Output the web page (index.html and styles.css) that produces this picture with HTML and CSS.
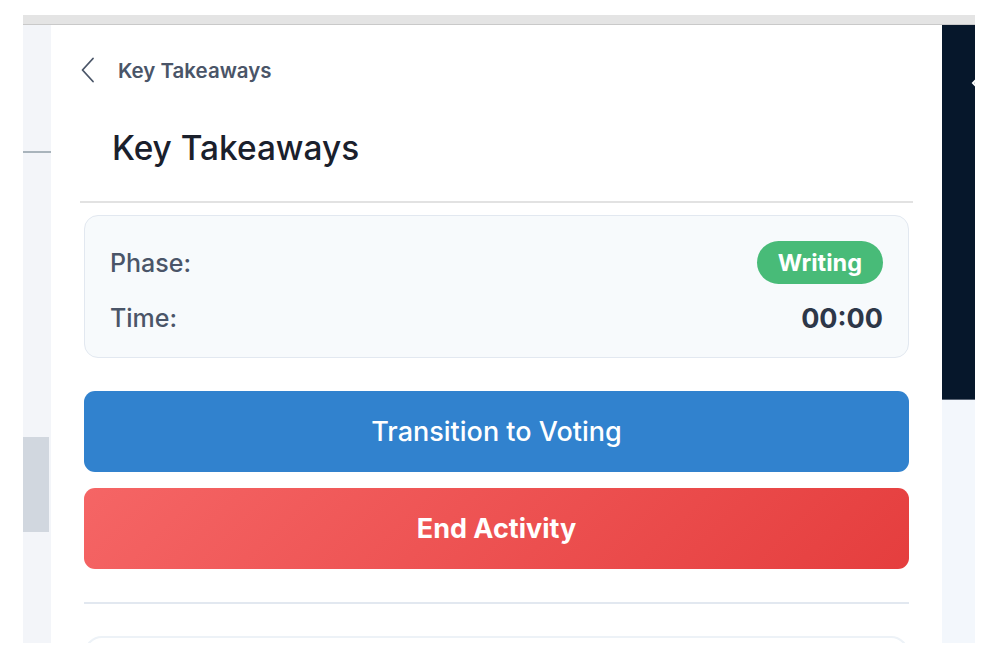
FILE: index.html
```html
<!DOCTYPE html>
<html lang="en">
<head>
    <meta charset="UTF-8">
    <meta name="viewport" content="width=device-width, initial-scale=1.0">
    <title>Key Takeaways</title>
    <link rel="stylesheet" href="styles.css">
</head>
<body>
    <div class="frame">
        <div class="topbar"></div>
        <div class="layout">
            <aside class="side-left">
                <div class="side-line"></div>
                <div class="side-block"></div>
            </aside>

            <main class="panel">
                <div class="crumb">
                    <svg class="crumb-back" width="16" height="26" viewBox="0 0 16 26">
                        <path d="M13 1.5 L2.5 13 L13 24.5" fill="none" stroke="#4a5568" stroke-width="1.8" stroke-linecap="round" stroke-linejoin="round"/>
                    </svg>
                    <span class="crumb-text">Key Takeaways</span>
                </div>

                <h1 class="title">Key Takeaways</h1>
                <div class="divider"></div>

                <div class="controls">
                    <div class="status-card">
                        <div class="status-row">
                            <span class="status-label">Phase:</span>
                            <span class="pill">Writing</span>
                        </div>
                        <div class="status-row status-row-time">
                            <span class="status-label">Time:</span>
                            <span class="timer">00:00</span>
                        </div>
                    </div>

                    <button class="btn btn-primary">Transition to Voting</button>
                    <button class="btn btn-danger">End Activity</button>

                    <div class="divider divider-soft"></div>
                    <div class="next-card"></div>
                </div>
            </main>

            <aside class="side-right">
                <div class="side-dark">
                    <svg class="side-toggle" width="10" height="14" viewBox="0 0 10 14">
                        <path d="M7 2 L2 7 L7 12" fill="none" stroke="#ffffff" stroke-width="2" stroke-linecap="round"/>
                    </svg>
                </div>
                <div class="side-light"></div>
            </aside>
        </div>
    </div>
</body>
</html>
```

FILE: styles.css
```css
* {
    margin: 0;
    padding: 0;
    box-sizing: border-box;
}

body {
    font-family: Inter, "Noto Sans", sans-serif;
    background: white;
    height: 659px;
    overflow: hidden;
}

.frame {
    margin: 15px 24px 0 23px;
    height: 628px;
    display: flex;
    flex-direction: column;
}

.topbar {
    height: 10px;
    background: #e4e4e4;
    border-bottom: 1px solid #c9c9c9;
}

.layout {
    flex: 1;
    display: flex;
    overflow: hidden;
}

.side-left {
    width: 28px;
    background: #f3f5f9;
    display: flex;
    flex-direction: column;
}

.side-line {
    margin-top: 126px;
    height: 2px;
    background: #a9b4bc;
}

.side-block {
    margin-top: 284px;
    width: 26px;
    height: 95px;
    background: #d1d7df;
}

.panel {
    flex: 1;
    background: white;
    padding: 20px 29px 0;
    overflow: hidden;
}

.crumb {
    height: 50px;
    display: flex;
    align-items: center;
    gap: 22px;
}

.crumb-text {
    font-size: 20.5px;
    font-weight: 600;
    color: #4a5568;
}

.title {
    margin-top: 33px;
    padding-left: 32px;
    height: 40px;
    line-height: 40px;
    font-size: 33.4px;
    font-weight: 500;
    color: #1a202c;
}

.divider {
    margin-top: 33px;
    height: 2px;
    background: #e2e2e2;
}

.controls {
    padding: 0 4px;
    display: flex;
    flex-direction: column;
}

.status-card {
    margin-top: 12px;
    padding: 25px;
    background: #f7fafc;
    border: 1px solid #e2e8f0;
    border-radius: 14px;
    display: flex;
    flex-direction: column;
    gap: 20px;
}

.status-row {
    height: 43px;
    display: flex;
    align-items: center;
    justify-content: space-between;
}

.status-row-time {
    height: 28px;
}

.status-label {
    font-size: 25px;
    font-weight: 500;
    color: #4a5568;
}

.pill {
    height: 43px;
    padding: 0 21px;
    border-radius: 22px;
    background: #48bb78;
    color: white;
    font-size: 23.5px;
    font-weight: 700;
    display: flex;
    align-items: center;
}

.timer {
    font-size: 27px;
    font-weight: 700;
    color: #2d3748;
}

.btn {
    height: 81px;
    border: none;
    border-radius: 11px;
    color: white;
    font-family: inherit;
    font-size: 27px;
    cursor: pointer;
}

.btn-primary {
    margin-top: 33px;
    background: #3182ce;
    font-weight: 500;
}

.btn-danger {
    margin-top: 16px;
    background: linear-gradient(135deg, #f56565 0%, #e53e3e 100%);
    font-weight: 700;
}

.divider-soft {
    background: #e2e8f0;
}

.next-card {
    margin-top: 32px;
    height: 60px;
    border: 2px solid #edf2f7;
    border-radius: 18px;
}

.side-right {
    width: 33px;
    display: flex;
    flex-direction: column;
    overflow: hidden;
}

.side-dark {
    height: 375px;
    background: #06172b;
    border-bottom: 1px solid #5a6575;
    position: relative;
}

.side-toggle {
    position: absolute;
    left: 29px;
    top: 51px;
}

.side-light {
    flex: 1;
    background: #f3f7fc;
}
```
